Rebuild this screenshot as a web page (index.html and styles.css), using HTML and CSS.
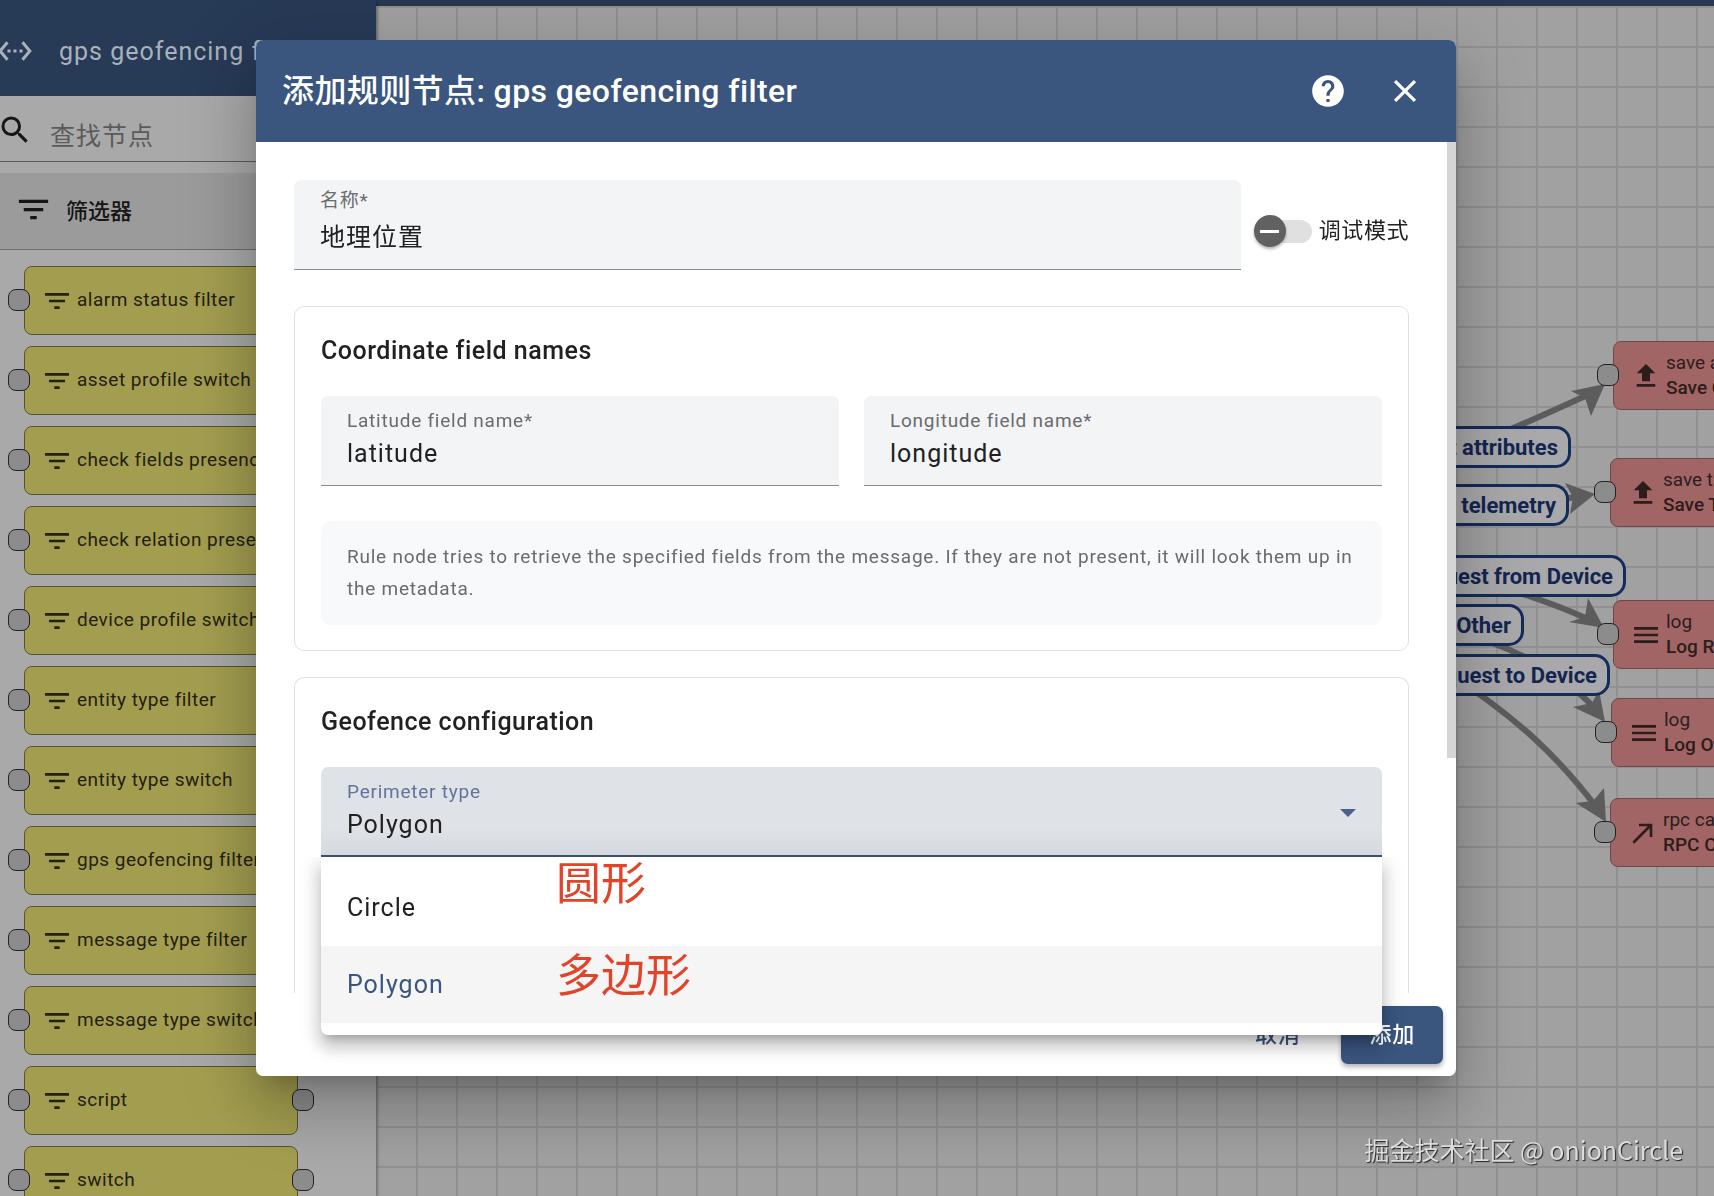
FILE: index.html
```
<!DOCTYPE html>
<html lang="zh-CN">
<head>
    <meta charset="UTF-8">
    <meta name="viewport" content="width=device-width, initial-scale=1.0">
    <title>添加规则节点</title>
    <link rel="stylesheet" href="styles.css">
</head>
<body>
    <svg class="defs" aria-hidden="true">
        <symbol id="i-filter" viewBox="0 0 24 24"><path d="M10 18h4v-2h-4v2zM3 6v2h18V6H3zm3 7h12v-2H6v2z"/></symbol>
        <symbol id="i-upload" viewBox="0 0 24 24"><path d="M9 16h6v-6h4l-7-7-7 7h4zm-4 2h14v2H5z"/></symbol>
        <symbol id="i-menu" viewBox="0 0 24 24"><path d="M3 18h18v-2H3v2zm0-5h18v-2H3v2zm0-7v2h18V6H3z"/></symbol>
        <symbol id="i-call" viewBox="0 0 24 24"><path d="M9 5v2h6.59L4 18.59 5.41 20 17 8.41V15h2V5z"/></symbol>
    </svg>

    <div class="page">
        <aside class="sidebar">
            <div class="sidebar-header">
                <svg class="icon-ethernet" viewBox="0 0 24 24"><path d="M7.77 6.76L6.23 5.48.82 12l5.41 6.52 1.54-1.28L3.42 12l4.35-5.24zM7 13h2v-2H7v2zm10-2h-2v2h2v-2zm-6 2h2v-2h-2v2zm6.77-7.52l-1.54 1.28L20.58 12l-4.35 5.24 1.54 1.28L23.18 12l-5.41-6.52z"/></svg>
                <span>gps geofencing filter</span>
            </div>
            <div class="search">
                <svg viewBox="0 0 24 24"><path d="M15.5 14h-.79l-.28-.27A6.471 6.471 0 0 0 16 9.5 6.5 6.5 0 1 0 9.5 16c1.61 0 3.09-.59 4.23-1.57l.27.28v.79l5 4.99L20.49 19l-4.99-5zm-6 0C7.01 14 5 11.99 5 9.5S7.01 5 9.5 5 14 7.01 14 9.5 11.99 14 9.5 14z"/></svg>
                <input type="text" placeholder="查找节点" aria-label="查找节点">
            </div>
            <div class="group-header">
                <svg><use href="#i-filter"/></svg>
                <span>筛选器</span>
            </div>
            <div class="node-list">
                <div class="node filter"><i class="port in"></i><svg><use href="#i-filter"/></svg><span>alarm status filter</span><i class="port out"></i></div>
                <div class="node filter"><i class="port in"></i><svg><use href="#i-filter"/></svg><span>asset profile switch</span><i class="port out"></i></div>
                <div class="node filter"><i class="port in"></i><svg><use href="#i-filter"/></svg><span>check fields presence</span><i class="port out"></i></div>
                <div class="node filter"><i class="port in"></i><svg><use href="#i-filter"/></svg><span>check relation presence</span><i class="port out"></i></div>
                <div class="node filter"><i class="port in"></i><svg><use href="#i-filter"/></svg><span>device profile switch</span><i class="port out"></i></div>
                <div class="node filter"><i class="port in"></i><svg><use href="#i-filter"/></svg><span>entity type filter</span><i class="port out"></i></div>
                <div class="node filter"><i class="port in"></i><svg><use href="#i-filter"/></svg><span>entity type switch</span><i class="port out"></i></div>
                <div class="node filter"><i class="port in"></i><svg><use href="#i-filter"/></svg><span>gps geofencing filter</span><i class="port out"></i></div>
                <div class="node filter"><i class="port in"></i><svg><use href="#i-filter"/></svg><span>message type filter</span><i class="port out"></i></div>
                <div class="node filter"><i class="port in"></i><svg><use href="#i-filter"/></svg><span>message type switch</span><i class="port out"></i></div>
                <div class="node filter"><i class="port in"></i><svg><use href="#i-filter"/></svg><span>script</span><i class="port out"></i></div>
                <div class="node filter"><i class="port in"></i><svg><use href="#i-filter"/></svg><span>switch</span><i class="port out"></i></div>
            </div>
        </aside>

        <main class="canvas">
            <div class="scene">
                <svg class="edges" viewBox="0 0 1338 1190">
                    <g class="lines">
                        <path d="M1064 448 C1120 432 1160 412 1214 388"/>
                        <path d="M1064 496 Q1140 496 1206 491"/>
                        <path d="M1064 566 C1120 578 1170 594 1214 614"/>
                        <path d="M1064 622 C1130 636 1180 662 1221 704"/>
                        <path d="M1064 662 C1144 712 1186 756 1221 802"/>
                    </g>
                    <g class="heads">
                        <path d="M1229 378 L1195 385 L1209 392 L1215 410z"/>
                        <path d="M1219 488 L1189 477 L1197 491 L1194 508z"/>
                        <path d="M1228 622 L1212 592 L1209 611 L1193 616z"/>
                        <path d="M1229 716 L1223 684 L1216 697 L1197 701z"/>
                        <path d="M1230 816 L1228 782 L1217 795 L1200 797z"/>
                    </g>
                </svg>

                <div class="edge-label l1">Post attributes</div>
                <div class="edge-label l2">Post telemetry</div>
                <div class="edge-label l3">RPC Request from Device</div>
                <div class="edge-label l4">Other</div>
                <div class="edge-label l5">RPC Request to Device</div>

                <div class="node action n1"><i class="port in"></i><svg><use href="#i-upload"/></svg><span>save attributes<b>Save Client Attributes</b></span></div>
                <div class="node action n2"><i class="port in"></i><svg><use href="#i-upload"/></svg><span>save timeseries<b>Save Timeseries</b></span></div>
                <div class="node action n3"><i class="port in"></i><svg><use href="#i-menu"/></svg><span>log<b>Log RPC from Device</b></span></div>
                <div class="node action n4"><i class="port in"></i><svg><use href="#i-menu"/></svg><span>log<b>Log Other</b></span></div>
                <div class="node action n5"><i class="port in"></i><svg><use href="#i-call"/></svg><span>rpc call request<b>RPC Call Request</b></span></div>
            </div>
        </main>
    </div>

    <div class="overlay">
        <div class="dialog" role="dialog" aria-labelledby="dialogTitle">
            <div class="dialog-header">
                <h2 id="dialogTitle">添加规则节点: gps geofencing filter</h2>
                <button class="icon-btn" type="button" aria-label="帮助">
                    <svg viewBox="0 0 24 24"><path d="M12 2C6.48 2 2 6.48 2 12s4.48 10 10 10 10-4.48 10-10S17.52 2 12 2zm1 17h-2v-2h2v2zm2.07-7.75l-.9.92C13.45 12.9 13 13.5 13 15h-2v-.5c0-1.1.45-2.1 1.17-2.83l1.24-1.26c.37-.36.59-.86.59-1.41 0-1.1-.9-2-2-2s-2 .9-2 2H8c0-2.21 1.79-4 4-4s4 1.79 4 4c0 .88-.36 1.68-.93 2.25z"/></svg>
                </button>
                <button class="icon-btn" type="button" aria-label="关闭">
                    <svg viewBox="0 0 24 24"><path d="M19 6.41L17.59 5 12 10.59 6.41 5 5 6.41 10.59 12 5 17.59 6.41 19 12 13.41 17.59 19 19 17.59 13.41 12z"/></svg>
                </button>
            </div>

            <div class="dialog-body">
                <div class="name-row">
                    <div class="field name-field">
                        <label for="name">名称*</label>
                        <input type="text" id="name" value="地理位置">
                    </div>
                    <label class="toggle"><input type="checkbox">调试模式</label>
                </div>

                <section class="card">
                    <h3>Coordinate field names</h3>
                    <div class="field-row">
                        <div class="field">
                            <label for="lat">Latitude field name*</label>
                            <input type="text" id="lat" value="latitude">
                        </div>
                        <div class="field">
                            <label for="lng">Longitude field name*</label>
                            <input type="text" id="lng" value="longitude">
                        </div>
                    </div>
                    <p class="hint">Rule node tries to retrieve the specified fields from the message. If they are not present, it will look them up in the metadata.</p>
                </section>

                <section class="card geofence">
                    <h3>Geofence configuration</h3>
                    <div class="select-wrap">
                        <div class="field active">
                            <label for="perimeter">Perimeter type</label>
                            <select id="perimeter">
                                <option>Circle</option>
                                <option selected>Polygon</option>
                            </select>
                        </div>
                        <ul class="options" role="listbox">
                            <li role="option">Circle<span class="note">圆形</span></li>
                            <li role="option" class="selected" aria-selected="true">Polygon<span class="note">多边形</span></li>
                        </ul>
                    </div>
                </section>
            </div>
            <div class="scroll-thumb"></div>

            <div class="dialog-actions">
                <button class="btn" type="button">取消</button>
                <button class="btn primary" type="button">添加</button>
            </div>
        </div>
    </div>

    <div class="watermark">掘金技术社区 @ onionCircle</div>
</body>
</html>
```
FILE: styles.css
```
* { box-sizing: border-box; }
body { margin: 0; height: 100vh; overflow: hidden; font-family: Roboto, "Noto Sans CJK SC", sans-serif; font-size: 19px; letter-spacing: 0.04em; color: #212121; }
h2, h3, p, ul { margin: 0; padding: 0; }
svg { display: block; flex: none; fill: currentColor; }
input, select, button { font: inherit; letter-spacing: inherit; color: inherit; }
.defs { display: none; }

/* page behind the dialog */
.page { display: grid; grid-template-columns: 376px 1fr; height: 100vh; }
.sidebar { display: flex; flex-direction: column; overflow: hidden; background: #a9a9a9; box-shadow: 1px 0 4px rgba(0,0,0,0.3); z-index: 1; }
.sidebar-header { flex: none; display: flex; align-items: center; height: 96px; padding-top: 6px; background: #273a56; color: #a9b1bd; font-size: 25px; letter-spacing: 1px; white-space: nowrap; }
.icon-ethernet { width: 36px; height: 36px; margin-left: -3px; margin-right: 26px; }
.search { flex: none; display: flex; align-items: center; height: 66px; padding-top: 3px; border-bottom: 1px solid #5c5c5c; }
.search svg { width: 36px; height: 36px; margin-left: -3px; color: #161616; }
.search input { flex: 1; min-width: 0; margin-left: 17px; padding: 12px 0 0; border: 0; outline: 0; background: none; font-size: 25px; letter-spacing: 1px; }
.search input::placeholder { color: #5b5b5b; opacity: 1; }
.group-header { flex: none; display: flex; align-items: center; height: 77px; margin-top: 11px; padding: 0 0 4px 14px; background: #9b9b9b; border-bottom: 1px solid #6c6c6c; font-size: 22px; font-weight: 500; letter-spacing: 0; color: #161616; }
.group-header svg { width: 39px; height: 39px; margin-right: 13px; }
.node-list { display: flex; flex-direction: column; gap: 11px; padding: 16px 78px 0 24px; }

.node { position: relative; display: flex; align-items: center; flex: none; height: 69px; padding-left: 16px; border: 1px solid #55552f; border-radius: 8px; white-space: nowrap; line-height: 25px; letter-spacing: 0.025em; color: #232010; }
.node svg { width: 32px; height: 32px; margin-right: 4px; }
.node span { padding-bottom: 2px; }
.node.filter { background: #a39e4f; }
.node.action { position: absolute; width: 274px; background: #a26566; border-color: #6d4a4a; letter-spacing: 0; color: #2c1d1b; }
.node b { display: block; font-weight: 500; }
.port { position: absolute; top: 22px; width: 22px; height: 22px; border: 1px solid #222; border-radius: 8px; background: #8c8c8c; }
.port.in { left: -17px; }
.port.out { right: -17px; }

.canvas { overflow: hidden; border-top: 6px solid #273850; background-color: #a1a1a1; background-image: linear-gradient(to right, #919191 2px, transparent 2px), linear-gradient(#919191 2px, transparent 2px); background-size: 40px 40px; }
.scene { position: relative; width: 1338px; height: 1190px; }
.edges { position: absolute; left: 0; top: 0; width: 1338px; height: 1190px; }
.edges .lines { fill: none; stroke: #5c5c5c; stroke-width: 6; }
.edges .heads { fill: #5c5c5c; }
.edge-label { position: absolute; height: 42px; padding: 0 10px; border: 3px solid #142c5a; border-radius: 15px; background: #a9a9ab; font-size: 22px; font-weight: 700; line-height: 37px; letter-spacing: 0; white-space: nowrap; color: #142550; }
.l1 { right: 143px; top: 420px; }
.l2 { right: 145px; top: 478px; }
.l3 { right: 88px; top: 549px; }
.l4 { right: 190px; top: 598px; }
.l5 { right: 104px; top: 648px; }
.n1 { left: 1237px; top: 335px; }
.n2 { left: 1234px; top: 452px; }
.n3 { left: 1237px; top: 594px; }
.n4 { left: 1235px; top: 692px; }
.n5 { left: 1234px; top: 792px; }

/* dialog */
.overlay { position: fixed; inset: 0; z-index: 10; padding: 40px 258px 0 256px; }
.dialog { position: relative; display: flex; flex-direction: column; height: calc(100vh - 160px); border-radius: 7px; background: #fff; box-shadow: 0 18px 24px -11px rgba(0,0,0,0.2), 0 38px 61px 5px rgba(0,0,0,0.14), 0 14px 74px 13px rgba(0,0,0,0.12); }
.dialog-header { flex: none; display: flex; align-items: center; height: 102px; padding: 0 13px 0 26px; border-radius: 7px 7px 0 0; background: #3a557e; color: #fff; }
.dialog-header h2 { flex: 1; padding-bottom: 6px; font-size: 32px; font-weight: 500; letter-spacing: 0.0125em; }
.icon-btn { display: flex; align-items: center; justify-content: center; width: 77px; height: 77px; padding: 0; border: 0; background: none; }
.icon-btn svg { width: 38px; height: 38px; }
.dialog-body { flex: 1; min-height: 0; display: flex; flex-direction: column; padding: 38px 47px 0 38px; }
.name-row { display: flex; align-items: center; gap: 13px; margin-bottom: 36px; }
.name-row .field { flex: 1; }
.toggle { display: flex; align-items: center; gap: 7px; padding-top: 12px; font-size: 22px; letter-spacing: 0.025em; line-height: 32px; }
.toggle input { appearance: none; position: relative; width: 58px; height: 32px; margin: 0; }
.toggle input::before { content: ""; position: absolute; left: 5px; top: 5px; width: 53px; height: 23px; border-radius: 12px; background: #e0e0e0; }
.toggle input::after { content: ""; position: absolute; left: 0; top: 0; width: 32px; height: 32px; border-radius: 50%; background: linear-gradient(#fff, #fff) center / 19px 3px no-repeat #616161; box-shadow: 0 2px 3px rgba(0,0,0,0.3); }

.field { display: flex; flex-direction: column; height: 90px; padding: 13px 26px 0; border-bottom: 1px solid #8a8d91; border-radius: 7px 7px 0 0; background: #f3f4f6; }
.field label { line-height: 24px; color: #6a6b6d; }
.field input, .field select { appearance: none; width: 100%; height: 32px; margin-top: 5px; padding: 0; border: 0; outline: 0; background: none; font-size: 25px; line-height: 32px; letter-spacing: 1px; }
.name-field { padding-top: 9px; }
.name-field input { margin-top: 9px; }
.card { padding: 25px 26px; border: 1px solid #e0e0e0; border-radius: 10px; }
.card h3 { margin-bottom: 26px; font-size: 25px; font-weight: 500; line-height: 38px; letter-spacing: 0.02em; }
.field-row { display: grid; grid-template-columns: 1fr 1fr; gap: 25px; }
.hint { margin-top: 35px; padding: 20px 26px; border-radius: 10px; background: #f8f9fb; line-height: 32px; color: #6a6b6d; }
/* runs on below the scroll edge */
.geofence { flex: 1; margin-top: 26px; border-bottom: 0; border-radius: 10px 10px 0 0; }
.select-wrap { position: relative; }
.field.active { border-bottom: 2px solid #3b516f; background: linear-gradient(#dfe2e7 70%, #d5d9e0); }
.field.active label { color: #63739a; }
.select-wrap::after { content: ""; position: absolute; right: 26px; top: 42px; border: 8px solid transparent; border-top-color: #4a6190; }
.options { position: absolute; left: 0; right: 0; top: 90px; z-index: 2; padding: 12px 0; list-style: none; border-radius: 0 0 7px 7px; background: #fff; box-shadow: 0 8px 8px -5px rgba(0,0,0,0.2), 0 13px 16px 2px rgba(0,0,0,0.14), 0 5px 22px 3px rgba(0,0,0,0.12); clip-path: inset(0 -60px -60px); }
.options li { position: relative; height: 77px; padding: 0 26px; font-size: 25px; line-height: 77px; letter-spacing: 1px; }
.options .selected { background: #f5f5f5; color: #3a557e; }
.note { position: absolute; left: 235px; top: -17px; font-size: 45px; line-height: 66px; letter-spacing: 0; color: #e2442a; }
.options .selected .note { top: -2px; }
.scroll-thumb { position: absolute; right: 0; top: 102px; width: 9px; height: 616px; background: #d5d5d5; }
.dialog-actions { flex: none; display: flex; justify-content: flex-end; align-items: center; gap: 13px; height: 83px; padding: 0 13px; }
.btn { height: 58px; padding: 0 28px 5px; border: 0; border-radius: 7px; background: none; font-size: 22px; font-weight: 500; color: #3a557e; }
.btn.primary { background: #3a557e; color: #fff; box-shadow: 0 3px 5px rgba(0,0,0,0.3); }

.watermark { position: fixed; right: 31px; bottom: 29px; z-index: 20; font-family: "Noto Sans CJK SC", sans-serif; font-size: 25px; line-height: 36px; letter-spacing: 0; color: #dcdcdc; text-shadow: 1px 1px 1px #222; }
```
